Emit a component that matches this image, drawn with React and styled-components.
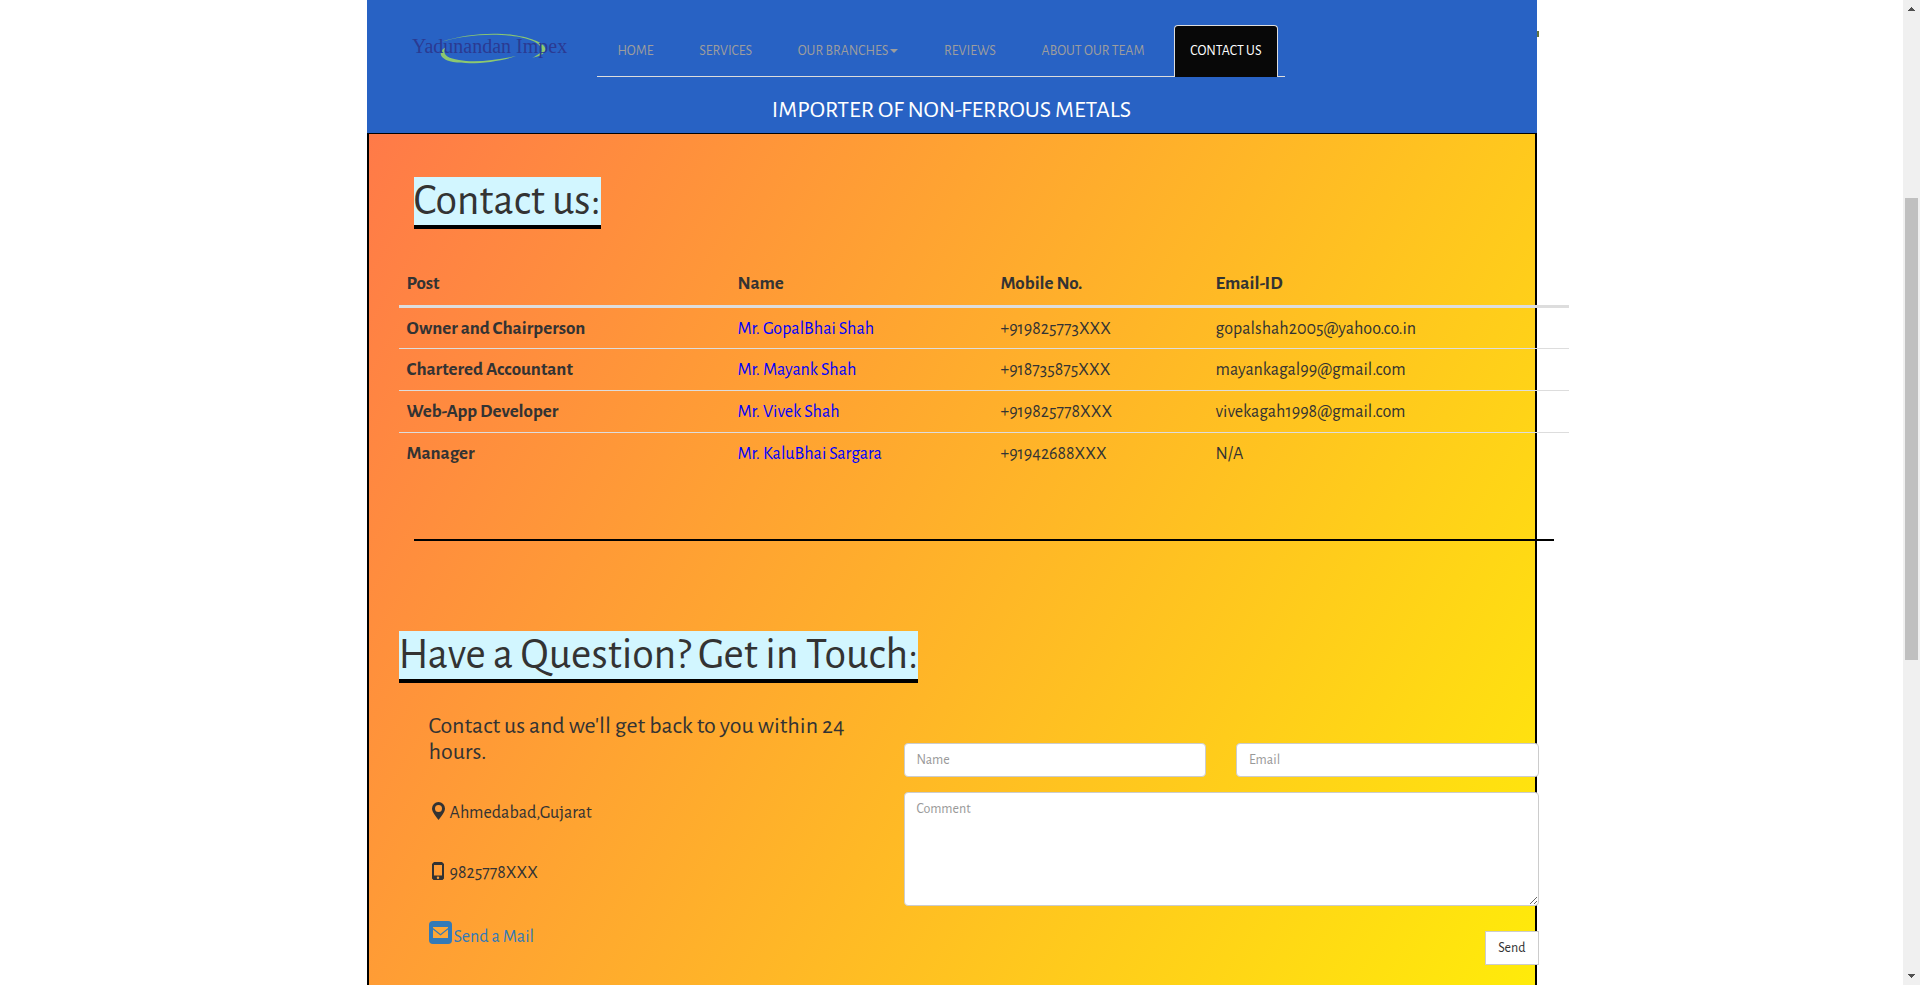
import React from "react";
import styled, { createGlobalStyle } from "styled-components";

const GlobalStyle = createGlobalStyle`
  *, *::before, *::after { box-sizing: border-box; }
  body {
    margin: 0;
    background: #fff;
    color: #333;
    font-family: "Alegreya Sans", Lato, "Open Sans", sans-serif;
    font-size: 18px;
    line-height: 24px;
  }
`;

const Window = styled.div`
  display: flex;
  height: 100vh;
  overflow: hidden;
`;

const Viewport = styled.div`
  flex: 1;
  min-width: 0;
  overflow: hidden;
`;

const Page = styled.div`
  display: flex;
  flex-direction: column;
  max-width: 1170px;
  min-height: 100%;
  margin: 0 auto;
`;

const Header = styled.header`
  position: relative;
  height: 133px;
  background: #2862c4;
`;

const CarouselEdge = styled.span`
  position: absolute;
  top: 31px;
  right: -2px;
  width: 2px;
  height: 6px;
  background: #66753f;
`;

const NavRow = styled.div`
  display: flex;
  align-items: flex-start;
  padding: 25px 30px 0 44px;
`;

const Brand = styled.a`
  display: block;
  width: 186px;
  height: 52px;
`;

const Tabs = styled.ul`
  display: flex;
  justify-content: space-between;
  width: 688px;
  height: 52px;
  margin: 0;
  padding: 0 7px 0 5px;
  border-bottom: 1px solid #ddd;
  list-style: none;
`;

const Tab = styled.a`
  display: flex;
  align-items: center;
  gap: 2px;
  height: 52px;
  padding: 0 15px 2px;
  border: 1px solid ${(p) => (p.$active ? "#ddd" : "transparent")};
  border-bottom: 0;
  border-radius: 4px 4px 0 0;
  background: ${(p) => (p.$active ? "#080808" : "transparent")};
  color: ${(p) => (p.$active ? "#fff" : "#9d9d9d")};
  font-size: 14px;
  line-height: 20px;
  text-decoration: none;
  white-space: nowrap;
`;

const Caret = styled.span`
  border-top: 4px solid currentColor;
  border-left: 4px solid transparent;
  border-right: 4px solid transparent;
`;

const Tagline = styled.p`
  margin: 20px 0 0;
  color: #fff;
  font-size: 24px;
  line-height: 26px;
  text-align: center;
`;

const Panel = styled.main`
  flex: 1;
  border: solid #000;
  border-width: 1px 2px 0;
  background: linear-gradient(121deg, #ff7a48, #ffeb0a);
`;

const Content = styled.div`
  margin: 0 -34px 0 30px;
`;

const Section = styled.section`
  padding-top: ${(p) => p.$top}px;
`;

const Heading = styled.h1`
  width: fit-content;
  margin: 0 ${(p) => (p.$inset ? 15 : 0)}px;
  border-bottom: 4px solid #000;
  background: #d2f6ff;
  font-size: 44px;
  font-weight: 400;
  line-height: 48px;
  white-space: nowrap;
`;

const Table = styled.table`
  width: 100%;
  margin-top: 33px;
  border-collapse: collapse;
  table-layout: fixed;
  text-align: left;
`;

const Col = styled.col`
  width: ${(p) => (p.$width ? `${p.$width}px` : "auto")};
`;

const HeadCell = styled.th`
  height: 44px;
  padding: 2px 8px 0;
  border-bottom: 3px solid #ddd;
  font-size: 19px;
  font-weight: 700;
`;

const Row = styled.tr`
  & + & { border-top: 1px solid #ddd; }
`;

const RowHead = styled.th`
  height: 42px;
  padding: 2px 8px 0;
  font-size: 19px;
  font-weight: 700;
`;

const Cell = styled.td`
  height: 42px;
  padding: 2px 8px 0;
  color: ${(p) => (p.$name ? "#00f" : "inherit")};
`;

const Rule = styled.hr`
  height: 2px;
  margin: 65px 15px 0;
  border: 0;
  background: #000;
`;

const Columns = styled.div`
  display: grid;
  grid-template-columns: 5fr 7fr;
  padding: 0 15px;
`;

const Details = styled.div`
  padding: 30px 15px 0;
`;

const Lead = styled.p`
  margin: 0 0 36px;
  font-size: 24px;
  line-height: 26px;
`;

const Detail = styled.p`
  display: flex;
  align-items: center;
  gap: 5px;
  height: 24px;
  margin: ${(p) => (p.$mail ? 40 : 36)}px 0 0;
  padding-left: ${(p) => (p.$mail ? 0 : 3)}px;
  svg { margin-bottom: ${(p) => (p.$mail ? 10 : 4)}px; }
`;

const MailLink = styled.a`
  display: flex;
  align-items: center;
  gap: 2px;
  color: #337ab7;
  text-decoration: none;
`;

const Form = styled.form`
  display: grid;
  grid-template-columns: 1fr 1fr;
  align-content: start;
  gap: 15px 30px;
  padding: 60px 15px 0;
`;

const Field = styled.input`
  width: 100%;
  height: 34px;
  padding: 6px 12px;
  border: 1px solid #ccc;
  border-radius: 4px;
  background: #fff;
  color: #555;
  font: inherit;
  font-size: 14px;
  line-height: 20px;
  &::placeholder { color: #999; opacity: 1; }
`;

const Comment = styled(Field).attrs({ as: "textarea" })`
  display: block;
  grid-column: 1 / -1;
  height: 114px;
  resize: vertical;
`;

const SendButton = styled.button`
  grid-column: 1 / -1;
  justify-self: end;
  height: 34px;
  margin-top: 10px;
  padding: 0 12px;
  border: 1px solid #ccc;
  background: #fff;
  color: #333;
  font: inherit;
  font-size: 14px;
`;

const Scrollbar = styled.div`
  display: flex;
  flex-direction: column;
  align-items: center;
  width: 17px;
  height: 100%;
  padding: 7px 0;
  background: #f0f0f0;
`;

const Track = styled.div`
  display: flex;
  flex: 1;
  flex-direction: column;
`;

const Thumb = styled.div`
  width: 13px;
  height: ${(p) => p.$size}%;
  margin-top: 187px;
  background: #c0c0c0;
`;

const tabs = [
  { label: "HOME" },
  { label: "SERVICES" },
  { label: "OUR BRANCHES", menu: true },
  { label: "REVIEWS" },
  { label: "ABOUT OUR TEAM" },
  { label: "CONTACT US", active: true },
];

const people = [
  ["Owner and Chairperson", "Mr. GopalBhai Shah", "+919825773XXX", "gopalshah2005@yahoo.co.in"],
  ["Chartered Accountant", "Mr. Mayank Shah", "+918735875XXX", "mayankagal99@gmail.com"],
  ["Web-App Developer", "Mr. Vivek Shah", "+919825778XXX", "vivekagah1998@gmail.com"],
  ["Manager", "Mr. KaluBhai Sargara", "+91942688XXX", "N/A"],
];

const Logo = () => (
  <svg width="160" height="52" viewBox="0 0 160 52" role="img" aria-label="Yadunandan Impex">
    <path
      d="M30 17C52 9 82 7 102 10C124 13 137 20 134 26C132 30 128 31 121 33C128 29 132 27 130 23C127 15 109 11 90 10C68 9 46 12 30 17Z"
      fill="#8cc870"
    />
    <path
      d="M35 22C27 26 27 34 42 37C61 40 88 37 105 31C87 35 64 38 48 35C34 33 31 28 35 22Z"
      fill="#8cc870"
    />
    <text x="1" y="28" fontFamily="'Liberation Serif', serif" fontSize="20" fill="#2b3a92">
      Yadunandan Impex
    </text>
  </svg>
);

const PinIcon = () => (
  <svg width="13" height="18" viewBox="0 0 13 18" aria-hidden="true">
    <path
      fillRule="evenodd"
      d="M6.5 0A6.5 6.5 0 0 0 0 6.5C0 10 3.5 14 6.500 18C9.500 14 13 10 13 6.500A6.500 6.500 0 0 0 6.500 0ZM6.500 3A3.500 3.500 0 1 1 6.500 10A3.500 3.500 0 1 1 6.500 3Z"
      fill="#333"
    />
  </svg>
);

const PhoneIcon = () => (
  <svg width="13" height="18" viewBox="0 0 13 18" aria-hidden="true">
    <path
      fillRule="evenodd"
      d="M2 0H10L12 2V16.500L10.500 18H1.500L0 16.500V2ZM2 3V13.500H10V3ZM6 14.500A1.200 1.200 0 1 0 6 17A1.200 1.200 0 1 0 6 14.500Z"
      fill="#333"
    />
  </svg>
);

const MailIcon = () => (
  <svg width="23" height="23" viewBox="0 0 23 23" aria-hidden="true">
    <rect width="23" height="23" rx="4" fill="#337ab7" />
    <path d="M4 6H19V7L11.500 13L4 7ZM4 8.500L11.500 14.500L19 8.500V17H4Z" fill="#ffa735" />
  </svg>
);

const Arrow = ({ down }) => (
  <svg width="7" height="4" viewBox="0 0 7 4" shapeRendering="crispEdges" aria-hidden="true">
    <path d={down ? "M0 0H7V1H6V2H5V3H4V4H3V3H2V2H1V1H0Z" : "M0 4H7V3H6V2H5V1H4V0H3V1H2V2H1V3H0Z"} fill="#505050" />
  </svg>
);

export default function App() {
  return (
    <Window>
      <GlobalStyle />
      <Viewport>
        <Page>
          <Header>
            <NavRow>
              <Brand href="#home"><Logo /></Brand>
              <nav>
                <Tabs>
                  {tabs.map((t) => (
                    <li key={t.label}>
                      <Tab href="#" $active={t.active}>
                        {t.label}
                        {t.menu && <Caret />}
                      </Tab>
                    </li>
                  ))}
                </Tabs>
              </nav>
            </NavRow>
            <Tagline>IMPORTER OF NON-FERROUS METALS</Tagline>
            <CarouselEdge />
          </Header>
          <Panel>
            <Content>
              <Section $top={43}>
                <Heading $inset>Contact us:</Heading>
                <Table>
                  <colgroup>
                    <Col $width={331} />
                    <Col $width={263} />
                    <Col $width={215} />
                    <Col />
                  </colgroup>
                  <thead>
                    <tr>
                      {["Post", "Name", "Mobile No.", "Email-ID"].map((h) => (
                        <HeadCell key={h} scope="col">{h}</HeadCell>
                      ))}
                    </tr>
                  </thead>
                  <tbody>
                    {people.map(([post, name, mobile, email]) => (
                      <Row key={post}>
                        <RowHead scope="row">{post}</RowHead>
                        <Cell $name>{name}</Cell>
                        <Cell>{mobile}</Cell>
                        <Cell>{email}</Cell>
                      </Row>
                    ))}
                  </tbody>
                </Table>
                <Rule />
              </Section>
              <Section $top={90}>
                <Heading as="h2">Have a Question? Get in Touch:</Heading>
                <Columns>
                  <Details>
                    <Lead>Contact us and we'll get back to you within 24 hours.</Lead>
                    <Detail><PinIcon />Ahmedabad,Gujarat</Detail>
                    <Detail><PhoneIcon />9825778XXX</Detail>
                    <Detail $mail>
                      <MailLink href="#mail"><MailIcon />Send a Mail</MailLink>
                    </Detail>
                  </Details>
                  <Form>
                    <Field type="text" placeholder="Name" aria-label="Name" />
                    <Field type="email" placeholder="Email" aria-label="Email" />
                    <Comment placeholder="Comment" aria-label="Comment" />
                    <SendButton type="button">Send</SendButton>
                  </Form>
                </Columns>
              </Section>
            </Content>
          </Panel>
        </Page>
      </Viewport>
      <Scrollbar aria-hidden="true">
        <Arrow />
        <Track><Thumb $size={48} /></Track>
        <Arrow down />
      </Scrollbar>
    </Window>
  );
}
